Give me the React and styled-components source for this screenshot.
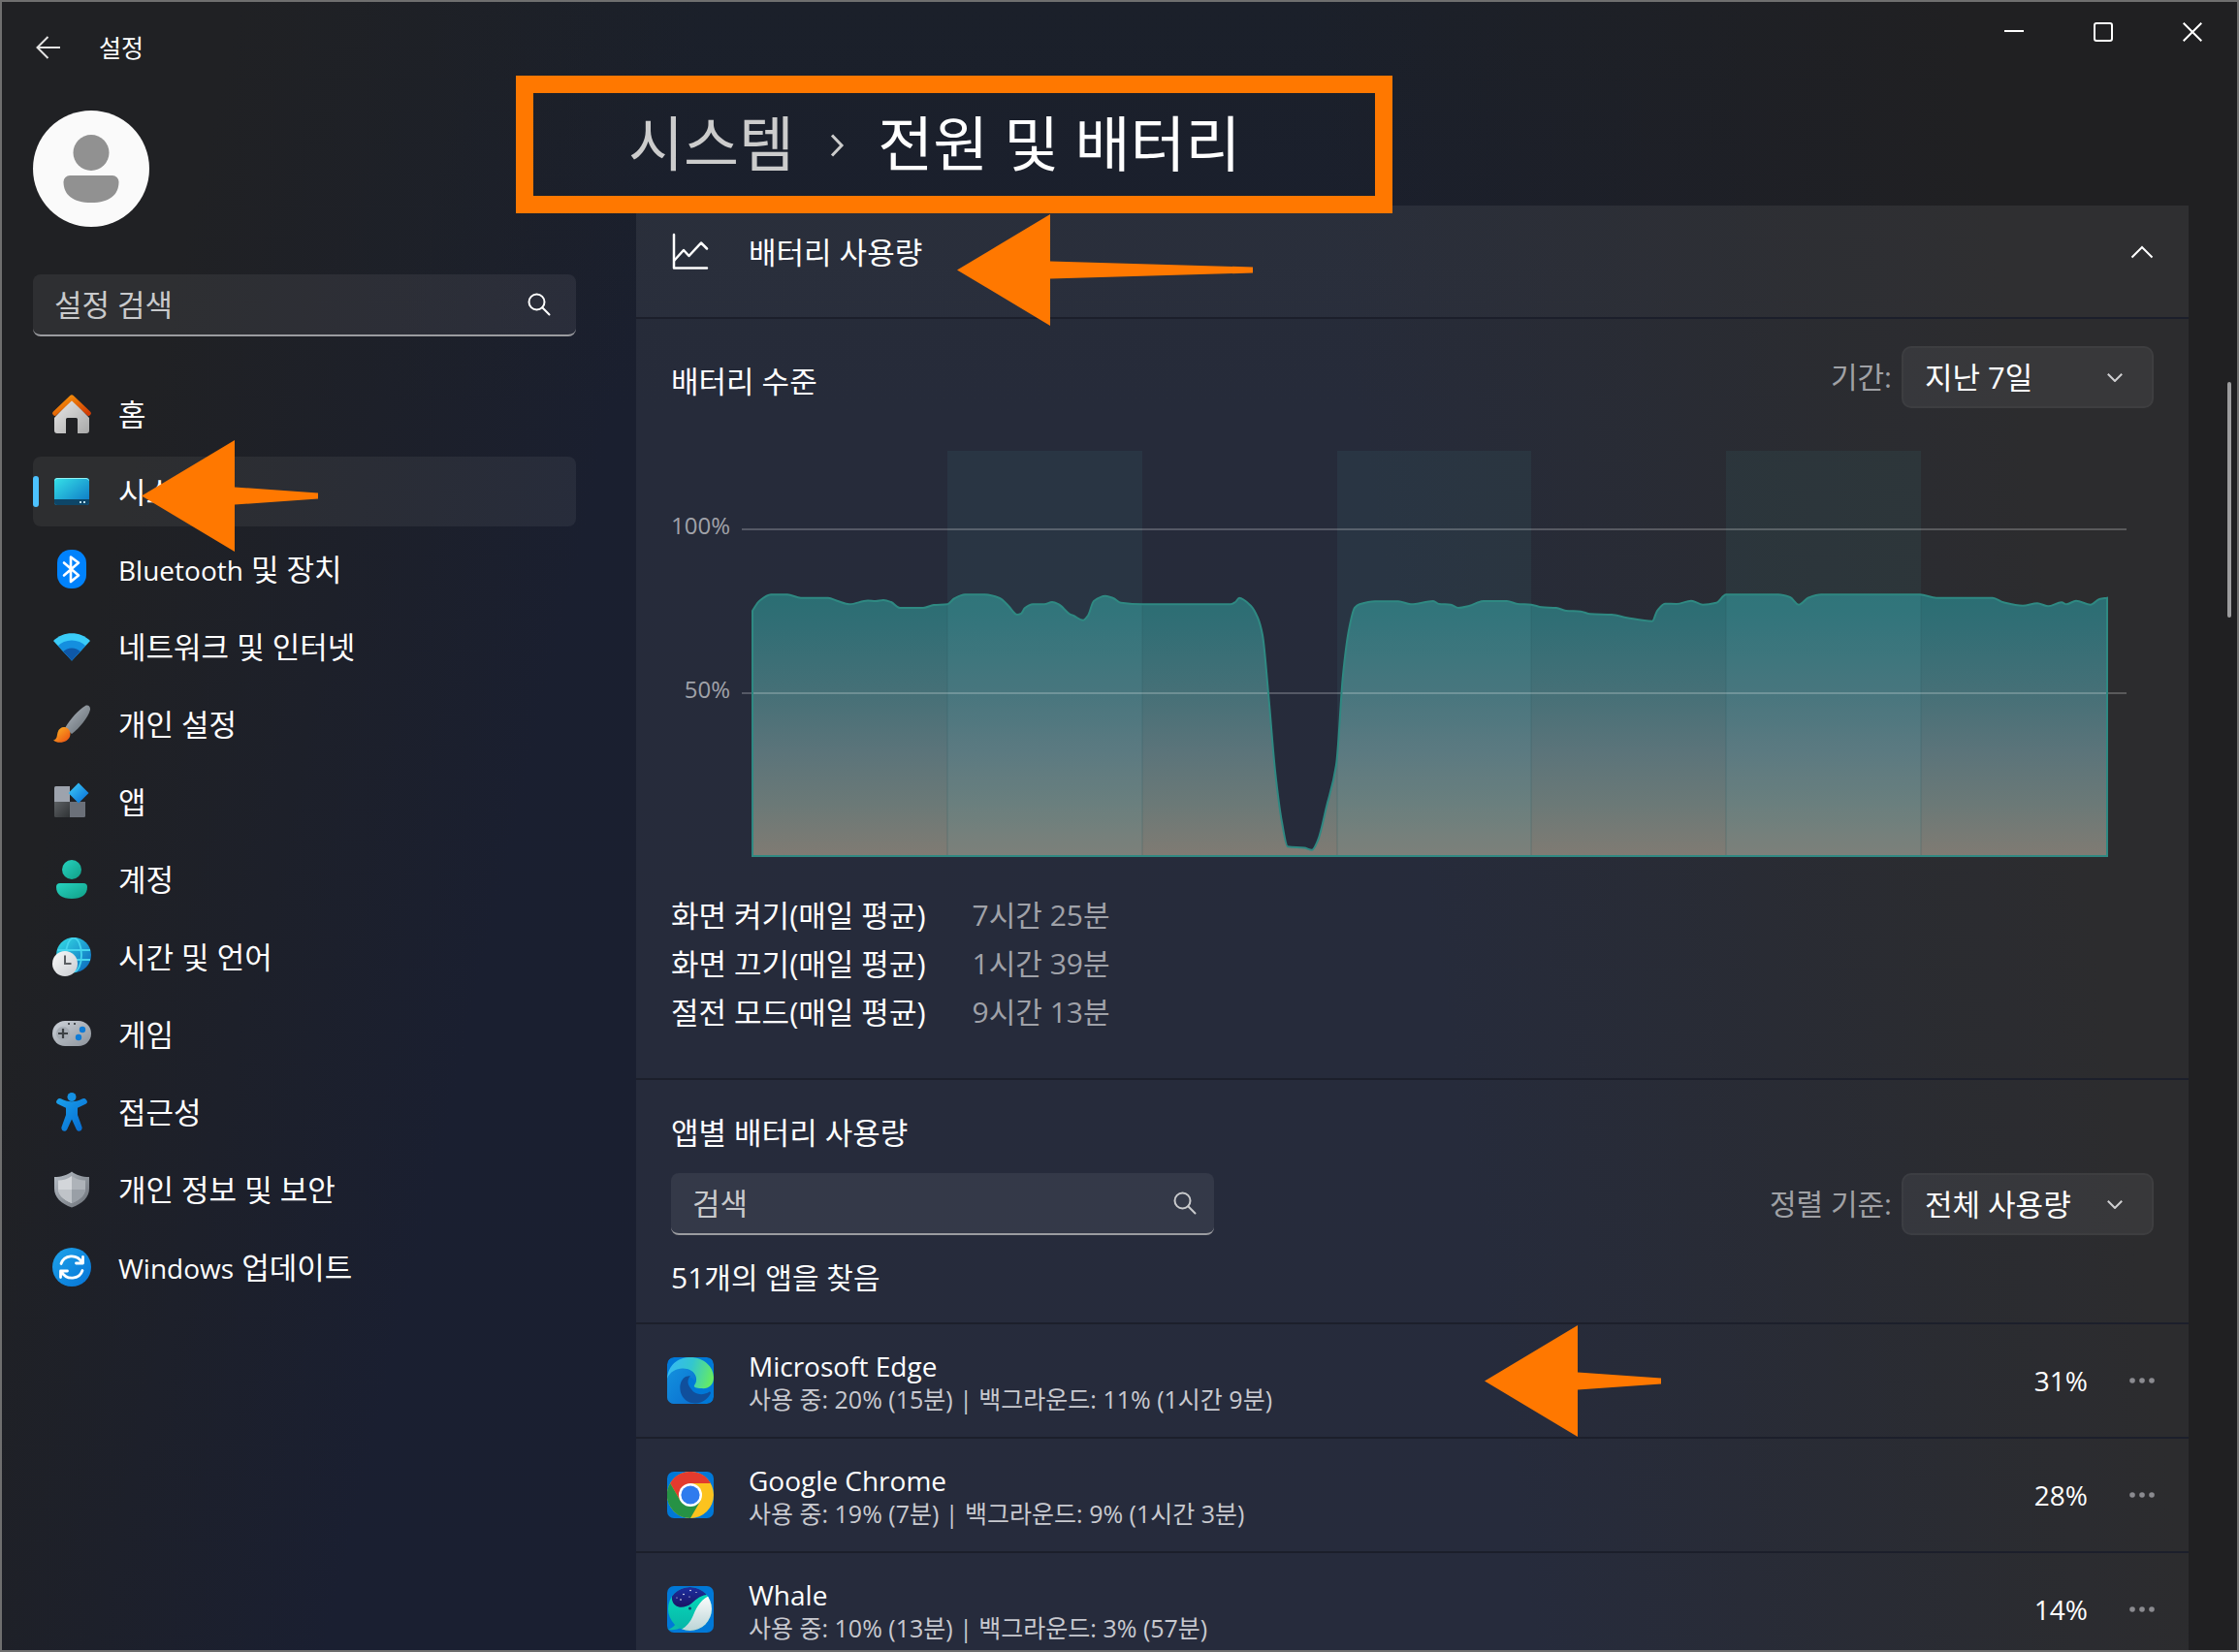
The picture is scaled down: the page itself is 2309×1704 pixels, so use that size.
import React from "react";
import styled, { createGlobalStyle, css } from "styled-components";

const ORANGE = "#ff7800";
const ACCENT = "#4cc2ff";

const GlobalStyle = createGlobalStyle`
  *, *::before, *::after { box-sizing: border-box; }
  body {
    margin: 0;
    background: #1a1f2f;
    color: #ffffff;
    font-family: "Open Sans", "Noto Sans CJK KR", sans-serif;
    font-size: 31px;
    line-height: 40px;
  }
  h1, h2, h3, p, ul, dl, dd, dt { margin: 0; padding: 0; font: inherit; }
  ul { list-style: none; }
  svg { display: block; flex: none; }
`;

/* ---------- window frame ---------- */

const Window = styled.div`
  position: relative;
  display: flex;
  flex-direction: column;
  height: 100vh;
  overflow: hidden;
  border: 2px solid #6f6f6f;
  background:
    linear-gradient(103deg, #202124 9%, rgba(32, 33, 36, 0) 27%),
    linear-gradient(262deg, #202022 11%, rgba(32, 32, 34, 0) 38%),
    linear-gradient(180deg, #1b202a 0%, #1a1f2f 25%, #1a1f31 100%);
`;

const TitleBar = styled.header`
  display: flex;
  justify-content: space-between;
  align-items: flex-start;
  height: 94px;
  flex: none;
`;

const TitleGroup = styled.div`
  display: flex;
  align-items: center;
  gap: 38px;
  height: 94px;
  padding-left: 34px;
  font-size: 25px;
`;

const IconButton = styled.button`
  display: grid;
  place-items: center;
  padding: 0;
  border: 0;
  background: none;
  color: ${(p) => p.$color || "#ffffff"};
`;

const Caption = styled(IconButton)`
  width: 92px;
  height: 62px;
`;

const Captions = styled.div`
  display: flex;
`;

const Body = styled.div`
  display: flex;
  flex: 1;
  min-height: 0;
`;

/* ---------- side bar ---------- */

const Sidebar = styled.aside`
  flex: none;
  width: 646px;
  padding: 18px 54px 0 32px;
`;

const Avatar = styled.div`
  width: 120px;
  height: 120px;
  border-radius: 50%;
  background: #fafafa;
`;

const SearchField = styled.label`
  position: relative;
  display: flex;
  align-items: center;
  height: 64px;
  padding: 0 ${(p) => (p.$compact ? 10 : 18)}px 0 22px;
  border-radius: 8px;
  border-bottom: 2px solid #9b9ca0;
  background: rgba(255, 255, 255, 0.065);
  color: ${(p) => (p.$compact ? "#c9cacc" : "#ffffff")};
  width: ${(p) => (p.$compact ? "560px" : "auto")};
`;

const SearchInput = styled.input`
  flex: 1;
  min-width: 0;
  padding: 0;
  border: 0;
  outline: 0;
  background: none;
  color: #ffffff;
  font: inherit;
  &::placeholder { color: #c9cacc; opacity: 1; }
`;

const SearchIconSlot = styled.span`
  display: grid;
  place-items: center;
  width: 40px;
`;

const NavList = styled.ul`
  display: flex;
  flex-direction: column;
  gap: 8px;
  margin-top: 44px;
`;

const NavItem = styled.li`
  position: relative;
`;

const NavLink = styled.a`
  display: flex;
  align-items: center;
  gap: 28px;
  height: 72px;
  padding-left: 20px;
  border-radius: 8px;
  color: #ffffff;
  text-decoration: none;
  white-space: nowrap;
  ${(p) => p.$active && css`
    background: rgba(255, 255, 255, 0.06);
    &::before {
      content: "";
      position: absolute;
      left: 0;
      top: 20px;
      width: 6px;
      height: 32px;
      border-radius: 3px;
      background: ${ACCENT};
    }
  `}
`;

const Latin = styled.span`
  font-size: 28px;
`;

const SidebarSearch = styled.div`
  margin-top: 49px;
`;

/* ---------- main column ---------- */

const Main = styled.main`
  flex: 1;
  min-width: 0;
  padding-right: 50px;
`;

const Breadcrumb = styled.nav`
  position: relative;
  display: flex;
  align-items: center;
  height: 116px;
  padding-bottom: 12px;
  gap: 34px;
  font-size: 62px;
  line-height: 80px;
  white-space: nowrap;
`;

const Crumb = styled.a`
  color: #cccccc;
  text-decoration: none;
`;

const Highlight = styled.span`
  position: absolute;
  z-index: 2;
  left: -116px;
  top: -18px;
  width: 904px;
  height: 142px;
  border: 18px solid ${ORANGE};
  pointer-events: none;
`;

const Card = styled.section`
  margin-left: 8px;
  background: rgba(255, 255, 255, 0.055);
`;

const Divided = css`
  border-bottom: 2px solid #1c1f2b;
`;

const CardHeader = styled.div`
  position: relative;
  display: flex;
  align-items: center;
  gap: 40px;
  height: 117px;
  padding: 0 36px 20px 36px;
  background: rgba(255, 255, 255, 0.015);
  ${Divided}
`;

const Grow = styled.div`
  flex: 1;
  min-width: 0;
`;

const Section = styled.div`
  padding: ${(p) => p.$pad};
  ${Divided}
`;

const Toolbar = styled.div`
  display: flex;
  align-items: center;
  justify-content: space-between;
  height: 64px;
  margin: ${(p) => p.$margin || 0};
`;

const SubTitle = styled.h3`
  padding-top: 8px;
`;

const Found = styled.p`
  && { font-size: 30px; }
`;

const Picker = styled.div`
  display: flex;
  align-items: center;
  gap: 10px;
  color: #a0a1a5;
  font-size: 30px;
`;

const SelectBox = styled.div`
  position: relative;
  width: 260px;
`;

const Select = styled.select`
  appearance: none;
  width: 100%;
  height: 64px;
  padding: 0 60px 0 22px;
  border: 2px solid rgba(255, 255, 255, 0.03);
  border-radius: 10px;
  background: rgba(255, 255, 255, 0.06);
  color: #ffffff;
  font-family: inherit;
  font-size: 31px;
`;

const SelectArrow = styled.span`
  position: absolute;
  right: 32px;
  top: 28px;
  color: #d0d0d2;
  pointer-events: none;
`;

/* ---------- chart ---------- */

const ChartRow = styled.div`
  display: flex;
  gap: 12px;
  margin-top: 44px;
  padding-right: 28px;
`;

const Axis = styled.div`
  display: flex;
  flex-direction: column;
  gap: 129px;
  width: 61px;
  padding-top: 57px;
  color: #a0a2a9;
  font-size: 24px;
  text-align: right;
`;

const Plot = styled.svg`
  flex: 1 1 0;
  min-width: 0;
  height: 420px;
`;

/* ---------- statistics ---------- */

const Stats = styled.dl`
  display: grid;
  grid-template-columns: max-content max-content;
  column-gap: 48px;
  margin-top: 34px;
  line-height: 50px;
`;

const StatValue = styled.dd`
  color: #a0a2a9;
  && { font-size: 30px; }
`;

/* ---------- app list ---------- */

const AppRow = styled.li`
  position: relative;
  display: flex;
  align-items: center;
  height: 118px;
  padding: 0 34px 0 32px;
  gap: 36px;
  ${Divided}
`;

const AppText = styled.div`
  flex: 1;
  min-width: 0;
  padding-top: 4px;
  font-size: 28px;
  line-height: 34px;
`;

const AppDetail = styled.p`
  color: #c8c9cf;
  && { font-size: 25px; }
`;

const Share = styled.span`
  font-size: 28px;
  margin-right: 6px;
`;

const ScrollThumb = styled.div`
  position: absolute;
  right: 6px;
  top: 392px;
  width: 4px;
  height: 243px;
  border-radius: 2px;
  background: #9c9c9e;
`;

/* ---------- pointers ---------- */

const Pointer = styled.svg`
  position: absolute;
  z-index: 3;
  left: ${(p) => p.$left}px;
  top: ${(p) => p.$top}px;
  overflow: visible;
  pointer-events: none;
`;

function Arrow({ left, top, length }) {
  return (
    <Pointer $left={left} $top={top} width={length} height="115" aria-hidden="true">
      <path
        d={`M0 57.5 L96 0 V48.5 L${length} 54.5 V60.5 L96 66.5 V115 Z`}
        fill={ORANGE}
      />
    </Pointer>
  );
}

/* ---------- line icons ---------- */

const BackIcon = () => (
  <svg width="28" height="24" viewBox="0 0 28 24" fill="none" stroke="currentColor" strokeWidth="2">
    <path d="M26 12H3M13.500 1 2.500 12l11 11" />
  </svg>
);

const SearchIcon = () => (
  <svg width="24" height="24" viewBox="0 0 24 24" fill="none" stroke="currentColor" strokeWidth="2" strokeLinecap="round">
    <circle cx="9.500" cy="9.500" r="8" />
    <path d="M15.300 15.300 22.500 22.500" />
  </svg>
);

const CrumbIcon = () => (
  <svg width="18" height="30" viewBox="0 0 18 30" fill="none" stroke="#cccccc" strokeWidth="3">
    <path d="M5 6.500 15 17 5 27.500" />
  </svg>
);

const ChevronDown = () => (
  <svg width="16" height="9" viewBox="0 0 16 9" fill="none" stroke="currentColor" strokeWidth="2">
    <path d="M.8.800 8 8 15.200.800" />
  </svg>
);

const ChevronUp = () => (
  <svg width="24" height="14" viewBox="0 0 24 14" fill="none" stroke="currentColor" strokeWidth="2">
    <path d="M1.500 12.500 12 2 22.500 12.500" />
  </svg>
);

const LineChartIcon = () => (
  <svg width="40" height="40" viewBox="0 0 40 40" fill="none" stroke="#ffffff" strokeWidth="2.500" strokeLinecap="round" strokeLinejoin="round">
    <path d="M3 2v34.500h34" />
    <path d="M3.500 28.500 13 18l5.500 6L31 10.500l6 6" />
  </svg>
);

const MoreIcon = () => (
  <svg width="28" height="8" viewBox="0 0 28 8" fill="currentColor">
    <circle cx="4" cy="4" r="2.800" />
    <circle cx="14" cy="4" r="2.800" />
    <circle cx="24" cy="4" r="2.800" />
  </svg>
);

/* ---------- coloured icons ---------- */

const Tile = ({ children, size = 40 }) => (
  <svg width={size} height={size} viewBox={`0 0 ${size} ${size}`} aria-hidden="true">
    {children}
  </svg>
);

const Ramp = ({ id, from, to, x2 = 1, y2 = 1 }) => (
  <linearGradient id={id} x1="0" y1="0" x2={x2} y2={y2}>
    <stop offset="0" stopColor={from} />
    <stop offset="1" stopColor={to} />
  </linearGradient>
);

const HomeIcon = () => (
  <Tile>
    <defs>
      <Ramp id="homeWall" from="#e9e9e9" to="#a8a8a8" />
      <Ramp id="homeRoof" from="#f99a0b" to="#d23c04" />
    </defs>
    <path d="M20 5 38 24v13a3 3 0 0 1-3 3h-9V25.500a1.500 1.500 0 0 0-1.500-1.500h-9a1.500 1.500 0 0 0-1.500 1.500V40H5a3 3 0 0 1-3-3V24Z" fill="url(#homeWall)" />
    <path d="M2.700 19.300 20 2.900l17.300 16.400" fill="none" stroke="url(#homeRoof)" strokeWidth="5" strokeLinecap="round" strokeLinejoin="round" />
  </Tile>
);

const SystemIcon = () => (
  <Tile>
    <defs><Ramp id="sysScreen" from="#36e2e8" to="#0b73c4" /></defs>
    <rect x="2" y="6" width="36" height="28" rx="3" fill="url(#sysScreen)" />
    <path d="M2 28h36v3a3 3 0 0 1-3 3H5a3 3 0 0 1-3-3Z" fill="#0d4668" />
    <path d="M2.500 8.500a3 3 0 0 1 2.500-2h30a3 3 0 0 1 2.500 2" fill="none" stroke="#8ff3f5" strokeWidth="1" />
    <path d="M28 30h2v2h-2zM32 30h2v2h-2z" fill="#b8dcea" />
  </Tile>
);

const BluetoothIcon = () => (
  <Tile>
    <rect x="5" y="0" width="30" height="40" rx="14" fill="#0082fc" />
    <path d="M12 13.500 27 26.500l-8 6.500V7.500l8 6L12 26.500" fill="none" stroke="#fff" strokeWidth="2.600" strokeLinejoin="round" strokeLinecap="round" />
  </Tile>
);

const WifiIcon = () => (
  <Tile>
    <clipPath id="fan"><path d="M20 34.500 1 14C11 3.500 29 3.500 39 14Z" /></clipPath>
    <g clipPath="url(#fan)">
      <rect width="40" height="40" fill="#3accf8" />
      <circle cx="20" cy="34.500" r="21" fill="#148fdf" />
      <circle cx="20" cy="34.500" r="13" fill="#0e58a8" />
    </g>
  </Tile>
);

const BrushIcon = () => (
  <Tile>
    <defs>
      <Ramp id="brushStem" from="#b3bac2" to="#5e666d" />
      <Ramp id="brushTip" from="#fdb924" to="#ea4b12" />
    </defs>
    <path d="M13 24C19 14 27 5 34 1c2.500-1.500 5.500.5 5 4-2 8-11 19-19 25Z" fill="url(#brushStem)" />
    <path d="M1 36.500c4-1 3.500-4 4.500-8 1.500-5.500 7-7 10.500-4 4 3.500 3 9.500-1.500 12.500-4 2.500-10 2.500-13.500-.5Z" fill="url(#brushTip)" />
  </Tile>
);

const AppsIcon = () => (
  <Tile>
    <defs>
      <Ramp id="appDark" from="#5d6164" to="#2f3234" />
      <Ramp id="appDiamond" from="#41d1fa" to="#0468d4" />
    </defs>
    <path d="M2 5.500A1.500 1.500 0 0 1 3.500 4H18v16H2Z" fill="#9da3ad" />
    <path d="M2 20h16v16H3.500A1.500 1.500 0 0 1 2 34.500Z" fill="url(#appDark)" />
    <path d="M18 20h16v14.500a1.500 1.500 0 0 1-1.500 1.500H18Z" fill="#6b7079" />
    <path d="m27 .5 10.500 10.500L27 21.500 16.500 11Z" fill="url(#appDiamond)" />
  </Tile>
);

const AccountIcon = () => (
  <Tile>
    <defs><Ramp id="acct" from="#27d3c0" to="#109e86" /></defs>
    <circle cx="20" cy="10" r="10" fill="url(#acct)" />
    <path d="M8 24h24a4 4 0 0 1 4 4c0 8-6 12-16 12S4 36 4 28a4 4 0 0 1 4-4Z" fill="url(#acct)" />
  </Tile>
);

const TimeIcon = () => (
  <Tile>
    <defs>
      <Ramp id="globe" from="#35e0e6" to="#0a62bd" />
      <Ramp id="dial" from="#fafafa" to="#c9ccd1" />
    </defs>
    <circle cx="22" cy="18" r="18" fill="url(#globe)" />
    <g fill="none" stroke="#45d5ee" strokeWidth="1.800">
      <ellipse cx="22" cy="18" rx="8" ry="17.500" />
      <path d="M5 13h34M5 23h34" />
    </g>
    <circle cx="13" cy="27" r="13" fill="url(#dial)" />
    <path d="M13 18.500V27h6.500" fill="none" stroke="#5c5f63" strokeWidth="2" />
  </Tile>
);

const GameIcon = () => (
  <Tile>
    <defs><Ramp id="pad" from="#cdd2d9" to="#8d939b" /></defs>
    <rect x="0" y="6" width="40" height="26" rx="13" fill="url(#pad)" />
    <circle cx="11" cy="19" r="7" fill="#a5abb3" />
    <path d="M11 14v10M6 19h10" stroke="#3d4145" strokeWidth="2.200" />
    <path d="M16 8h2v2h-2zM22 8h2v2h-2z" fill="#4a4e53" />
    <circle cx="31" cy="15" r="3.200" fill="#0f7bd6" />
    <circle cx="27" cy="23" r="3.200" fill="#0f7bd6" />
  </Tile>
);

const AccessIcon = () => (
  <Tile>
    <defs><Ramp id="acc" from="#1ba1ea" to="#0469d2" /></defs>
    <circle cx="20" cy="4.500" r="4.500" fill="#1490e3" />
    <path d="M5.200 7.200a2.900 2.900 0 0 1 3.600-.9c7 3.800 15.400 3.800 22.400 0a2.900 2.900 0 0 1 3.600.9c1.700 1.600 1.500 3.600-.4 4.600L26 15.800V23l4.500 12.500c1 4-4 6-5.700 2.500L20 27.500 15.200 38c-1.700 3.500-6.700 1.500-5.700-2.500L14 23v-7.200l-8.400-4c-1.900-1-2.100-3-.4-4.600Z" fill="url(#acc)" />
  </Tile>
);

const ShieldIcon = () => (
  <Tile>
    <defs><Ramp id="shield" from="#b9c0c8" to="#6a6f76" /></defs>
    <path d="M20 1.500C24 5 31 7 38 7v12c0 9-7 15.500-18 19.500C9 34.500 2 28 2 19V7c7 0 14-2 18-5.500Z" fill="url(#shield)" />
    <path d="M20 6v28C11 30 6 25.500 6 19v-8.500c5 0 10-1.500 14-4.500Z" fill="#d3d6da" />
    <path d="M20 6v28c9-4 14-8.500 14-15v-8.500c-5 0-10-1.500-14-4.500Z" fill="#aeb3b9" />
    <path d="M6.200 20H20v14C11.500 30.500 6.500 26 6.200 20Z" fill="#bfc3c8" />
    <path d="M33.800 20H20v14c8.500-3.500 13.500-8 13.800-14Z" fill="#999fa6" />
  </Tile>
);

const UpdateIcon = () => (
  <Tile>
    <defs><Ramp id="upd" from="#1fa4ea" to="#0573d6" /></defs>
    <circle cx="20" cy="20" r="20" fill="url(#upd)" />
    <g fill="none" stroke="#fff" strokeWidth="2.800" strokeLinecap="round" strokeLinejoin="round">
      <path d="M9 16.500C12 7.500 25 5.500 31 15.500M31.500 9.500v6.500h-7" />
      <path d="M31 23.500C28 32.500 15 34.500 9 24.500M8.500 30.500V24h7" />
    </g>
  </Tile>
);

/* ---------- application logos ---------- */

const LogoPlate = () => <rect width="48" height="48" rx="7" fill="#0078d7" />;

const EdgeLogo = () => (
  <Tile size={48}>
    <defs>
      <linearGradient id="edgeWave" x1="0" y1=".3" x2="1" y2=".5">
        <stop offset="0" stopColor="#35b9f5" />
        <stop offset=".5" stopColor="#33c6cf" />
        <stop offset="1" stopColor="#66eb63" />
      </linearGradient>
      <Ramp id="edgeBody" from="#1391de" to="#0a6fd0" />
      <clipPath id="edgeClip"><rect width="48" height="48" rx="7" /></clipPath>
    </defs>
    <g clipPath="url(#edgeClip)">
      <LogoPlate />
      <path d="M0 20C3 12 12 10 20 12c7 2 10 7 9 13-5-8-13-6-15 2-2 9 4 19 14 21H0Z" fill="url(#edgeBody)" />
      <path d="M0 22C1 8 11 0 24 0c14 0 24 10 24 21 0 8-6 12-13 11-5 0-8-1-7-3 4-5 2-12-3-15C16 9 4 12 0 22Z" fill="url(#edgeWave)" />
      <path d="M19 20c-8 5-8 20 3 26 10 4 19-1 23-9 0-1-1-2-2-1-7 4-15 2-18-3-4-5-5-9-1-14Z" fill="#104f9c" />
    </g>
  </Tile>
);

const ChromeLogo = () => (
  <Tile size={48}>
    <LogoPlate />
    <circle cx="24" cy="24" r="24" fill="#fcc31e" />
    <path d="M24 12h20.800A24 24 0 0 0 3.200 12l10.400 18Z" fill="#e33b2e" />
    <path d="M13.600 30 3.200 12A24 24 0 0 0 24 48l10.400-18H24Z" fill="#269245" />
    <circle cx="24" cy="24" r="12" fill="#ffffff" />
    <circle cx="24" cy="24" r="9.600" fill="#2f7bee" />
  </Tile>
);

const WhaleLogo = () => (
  <Tile size={48}>
    <defs>
      <clipPath id="whaleClip"><circle cx="23.500" cy="23.500" r="22.500" /></clipPath>
      <Ramp id="whaleBody" from="#06e0bd" to="#08b2a6" x2={0} />
      <Ramp id="whaleBelly" from="#ffffff" to="#b8d2d4" x2={0} />
      <Ramp id="whaleSky" from="#1c2fa3" to="#1b1464" x2={0} />
    </defs>
    <LogoPlate />
    <path d="M1 45C8 42 11 38 11 31l10 4c-2 7-9 11-20 10Z" fill="#0cbba9" />
    <g clipPath="url(#whaleClip)">
      <rect width="48" height="48" fill="url(#whaleBody)" />
      <path d="M4 0h42v9C36 8 31 13 25 18 17 24 7 23 5 14Z" fill="url(#whaleSky)" />
      <path d="M48 8C36 12 31 20 27 30c-3 7-7 12-13 15l9 3h25Z" fill="url(#whaleBelly)" />
    </g>
    <circle cx="23.500" cy="23" r="1.500" fill="#123a6a" />
    <g fill="#ffffff">
      <circle cx="24" cy="4.500" r=".8" /><circle cx="17" cy="8.500" r=".8" /><circle cx="14" cy="14" r=".8" />
      <circle cx="23" cy="11" r=".6" /><circle cx="30" cy="6.500" r=".6" /><circle cx="10" cy="12" r=".6" />
    </g>
  </Tile>
);

/* ---------- data ---------- */

const NAV = [
  { label: "홈", Icon: HomeIcon },
  { label: "시스템", Icon: SystemIcon, active: true },
  { latin: "Bluetooth", label: " 및 장치", Icon: BluetoothIcon },
  { label: "네트워크 및 인터넷", Icon: WifiIcon },
  { label: "개인 설정", Icon: BrushIcon },
  { label: "앱", Icon: AppsIcon },
  { label: "계정", Icon: AccountIcon },
  { label: "시간 및 언어", Icon: TimeIcon },
  { label: "게임", Icon: GameIcon },
  { label: "접근성", Icon: AccessIcon },
  { label: "개인 정보 및 보안", Icon: ShieldIcon },
  { latin: "Windows", label: " 업데이트", Icon: UpdateIcon },
];

const STATS = [
  ["화면 켜기(매일 평균)", "7시간 25분"],
  ["화면 끄기(매일 평균)", "1시간 39분"],
  ["절전 모드(매일 평균)", "9시간 13분"],
];

const APPS = [
  { name: "Microsoft Edge", detail: "사용 중: 20% (15분) | 백그라운드: 11% (1시간 9분)", share: "31%", Logo: EdgeLogo },
  { name: "Google Chrome", detail: "사용 중: 19% (7분) | 백그라운드: 9% (1시간 3분)", share: "28%", Logo: ChromeLogo },
  { name: "Whale", detail: "사용 중: 10% (13분) | 백그라운드: 3% (57분)", share: "14%", Logo: WhaleLogo },
];

const LEVELS = [
  [11, 165], [18, 155], [30, 148.300], [47, 148.300], [61, 151.700], [89, 151.700], [99, 155], [111, 158.300], [130, 154.500],
  [138, 155], [146, 154], [154, 156], [163, 162], [187, 162], [198, 159], [212, 158.300], [219, 152.500], [230, 148.300],
  [251, 148.300], [266, 152], [275, 160], [284, 169], [288, 168], [292, 162], [300, 158.300], [312, 158.300], [320, 156],
  [327, 158.500], [338, 168.300], [342, 170], [352, 174.700], [357, 170], [363, 155], [375, 149.700], [383, 152], [391, 156.700],
  [413, 158.300], [504, 158.300], [509, 156], [513, 151.700], [525, 160], [532, 172], [537, 190], [543, 250], [550, 330],
  [557, 383], [563, 408.300], [580, 409.500], [588, 411.700], [594, 402], [603, 367], [613, 324], [620, 231], [626, 185],
  [632, 162], [637, 158.300], [653, 155.300], [677, 155.300], [690, 158.300], [713, 155], [719, 158], [731, 158.700],
  [739, 162], [750, 160], [765, 155], [789, 155], [800, 158], [814, 158.700], [825, 161.300], [840, 162], [850, 165],
  [865, 165.700], [875, 168.300], [897, 169], [913, 172.300], [939, 175.700], [944, 165], [952, 157.700], [964, 158],
  [979, 154.700], [991, 158.700], [1005, 156.700], [1015, 148.300], [1069, 148.300], [1081, 151], [1090, 158.700],
  [1100, 151.500], [1113, 148.300], [1215, 148.300], [1232, 151.700], [1290, 151.700], [1301, 156.300], [1321, 159.700],
  [1336, 157.300], [1347, 160.300], [1361, 156.300], [1366, 158.300], [1376, 154.700], [1391, 158.700], [1400, 153], [1408, 151.700],
];

const BASE = 418;

function monotonePath(points) {
  const n = points.length;
  const slope = [];
  for (let i = 0; i < n - 1; i += 1) {
    slope.push((points[i + 1][1] - points[i][1]) / (points[i + 1][0] - points[i][0]));
  }
  const tangent = points.map((_, i) => {
    if (i === 0) return slope[0];
    if (i === n - 1) return slope[n - 2];
    const a = slope[i - 1];
    const b = slope[i];
    return a * b <= 0 ? 0 : (2 * a * b) / (a + b);
  });
  let d = `M${points[0][0]} ${points[0][1]}`;
  for (let i = 0; i < n - 1; i += 1) {
    const [x0, y0] = points[i];
    const [x1, y1] = points[i + 1];
    const h = (x1 - x0) / 3;
    d += `C${(x0 + h).toFixed(2)} ${(y0 + h * tangent[i]).toFixed(2)} ${(x1 - h).toFixed(2)} ${(y1 - h * tangent[i + 1]).toFixed(2)} ${x1} ${y1}`;
  }
  return d;
}

const AREA = `${monotonePath(LEVELS)}V${BASE}H11Z`;
const BANDS = [[212, 201], [614, 200], [1015, 201]];

function BatteryChart() {
  return (
    <ChartRow>
      <Axis>
        <span>100%</span>
        <span>50%</span>
      </Axis>
      <Plot viewBox="0 0 1428 420" preserveAspectRatio="none" role="img" aria-label="배터리 수준">
        <defs>
          <linearGradient id="level" gradientUnits="userSpaceOnUse" x1="0" y1="148" x2="0" y2="418">
            <stop offset="0" stopColor="#2a6e73" />
            <stop offset=".12" stopColor="#316e75" />
            <stop offset=".38" stopColor="#467077" />
            <stop offset=".6" stopColor="#5b747a" />
            <stop offset=".8" stopColor="#6b7977" />
            <stop offset="1" stopColor="#807b73" />
          </linearGradient>
          <clipPath id="underLevel"><path d={AREA} /></clipPath>
        </defs>
        {BANDS.map(([x, w]) => (
          <rect key={x} x={x} y="0" width={w} height={BASE} fill="rgba(65,150,150,.1)" />
        ))}
        <path d={AREA} fill="url(#level)" />
        <g clipPath="url(#underLevel)">
          {BANDS.map(([x, w]) => (
            <g key={x}>
              <rect x={x} y="0" width={w} height={BASE} fill="rgba(100,190,200,.09)" />
              <path d={`M${x} 0V${BASE}M${x + w} 0V${BASE}`} stroke="rgba(40,90,95,.3)" strokeWidth="1" />
            </g>
          ))}
        </g>
        <path d="M0 81H1428M0 250H1428" stroke="rgba(255,255,255,.22)" strokeWidth="2" />
        <path d={AREA} fill="none" stroke="#2f8982" strokeWidth="2" />
      </Plot>
    </ChartRow>
  );
}

export default function App() {
  return (
    <>
      <GlobalStyle />
      <Window>
        <TitleBar>
          <TitleGroup>
            <IconButton aria-label="뒤로" $color="#e4e4e4"><BackIcon /></IconButton>
            <span>설정</span>
          </TitleGroup>
          <Captions>
            <Caption aria-label="최소화">
              <svg width="20" height="20" viewBox="0 0 20 20"><path d="M0 9h20" stroke="#fff" strokeWidth="2" /></svg>
            </Caption>
            <Caption aria-label="최대화">
              <svg width="20" height="20" viewBox="0 0 20 20"><rect x="1" y="1" width="18" height="18" rx="2" fill="none" stroke="#fff" strokeWidth="2" /></svg>
            </Caption>
            <Caption aria-label="닫기">
              <svg width="20" height="20" viewBox="0 0 20 20"><path d="m.7.700 18.600 18.600M19.300.700.700 19.300" stroke="#fff" strokeWidth="2" /></svg>
            </Caption>
          </Captions>
        </TitleBar>

        <Body>
          <Sidebar>
            <Avatar>
              <svg width="120" height="120" viewBox="0 0 120 120" fill="#919191">
                <circle cx="60" cy="43.500" r="18.500" />
                <path d="M38 67h44a6.500 6.500 0 0 1 6.500 6.500C88.500 87 79 95 60 95s-28.500-8-28.500-21.500A6.500 6.500 0 0 1 38 67Z" />
              </svg>
            </Avatar>
            <SidebarSearch>
              <SearchField>
                <SearchInput type="search" placeholder="설정 검색" aria-label="설정 검색" />
                <SearchIconSlot><SearchIcon /></SearchIconSlot>
              </SearchField>
            </SidebarSearch>
            <nav>
              <NavList>
                {NAV.map(({ latin, label, Icon, active }) => (
                  <NavItem key={label}>
                    <NavLink href="#" $active={active}>
                      <Icon />
                      <span>
                        {latin && <Latin>{latin}</Latin>}
                        {label}
                      </span>
                    </NavLink>
                    {active && <Arrow left={112} top={-17} length={182} />}
                  </NavItem>
                ))}
              </NavList>
            </nav>
          </Sidebar>

          <Main>
            <Breadcrumb>
              <Crumb href="#">시스템</Crumb>
              <CrumbIcon />
              <h1>전원 및 배터리</h1>
              <Highlight />
            </Breadcrumb>

            <Card>
              <CardHeader>
                <LineChartIcon />
                <Grow><h2>배터리 사용량</h2></Grow>
                <IconButton aria-label="접기"><ChevronUp /></IconButton>
                <Arrow left={331} top={9} length={305} />
              </CardHeader>

              <Section $pad="28px 36px 43px 36px">
                <Toolbar>
                  <SubTitle>배터리 수준</SubTitle>
                  <Picker>
                    <label htmlFor="period">기간:</label>
                    <SelectBox>
                      <Select id="period"><option>지난 7일</option></Select>
                      <SelectArrow><ChevronDown /></SelectArrow>
                    </SelectBox>
                  </Picker>
                </Toolbar>
                <BatteryChart />
                <Stats>
                  {STATS.map(([name, value]) => (
                    <React.Fragment key={name}>
                      <dt>{name}</dt>
                      <StatValue>{value}</StatValue>
                    </React.Fragment>
                  ))}
                </Stats>
              </Section>

              <Section $pad="26px 36px 26px 36px">
                <SubTitle>앱별 배터리 사용량</SubTitle>
                <Toolbar $margin="22px 0 24px">
                  <SearchField $compact>
                    <SearchInput type="search" placeholder="검색" aria-label="검색" />
                    <SearchIconSlot><SearchIcon /></SearchIconSlot>
                  </SearchField>
                  <Picker>
                    <label htmlFor="sort">정렬 기준:</label>
                    <SelectBox>
                      <Select id="sort"><option>전체 사용량</option></Select>
                      <SelectArrow><ChevronDown /></SelectArrow>
                    </SelectBox>
                  </Picker>
                </Toolbar>
                <Found>51개의 앱을 찾음</Found>
              </Section>

              <ul>
                {APPS.map(({ name, detail, share, Logo }, i) => (
                  <AppRow key={name}>
                    <Logo />
                    <AppText>
                      <h3>{name}</h3>
                      <AppDetail>{detail}</AppDetail>
                    </AppText>
                    <Share>{share}</Share>
                    <IconButton aria-label={`${name} 옵션`} $color="#8b8b90"><MoreIcon /></IconButton>
                    {i === 0 && <Arrow left={875} top={1} length={182} />}
                  </AppRow>
                ))}
              </ul>
            </Card>
          </Main>
        </Body>
        <ScrollThumb />
      </Window>
    </>
  );
}
